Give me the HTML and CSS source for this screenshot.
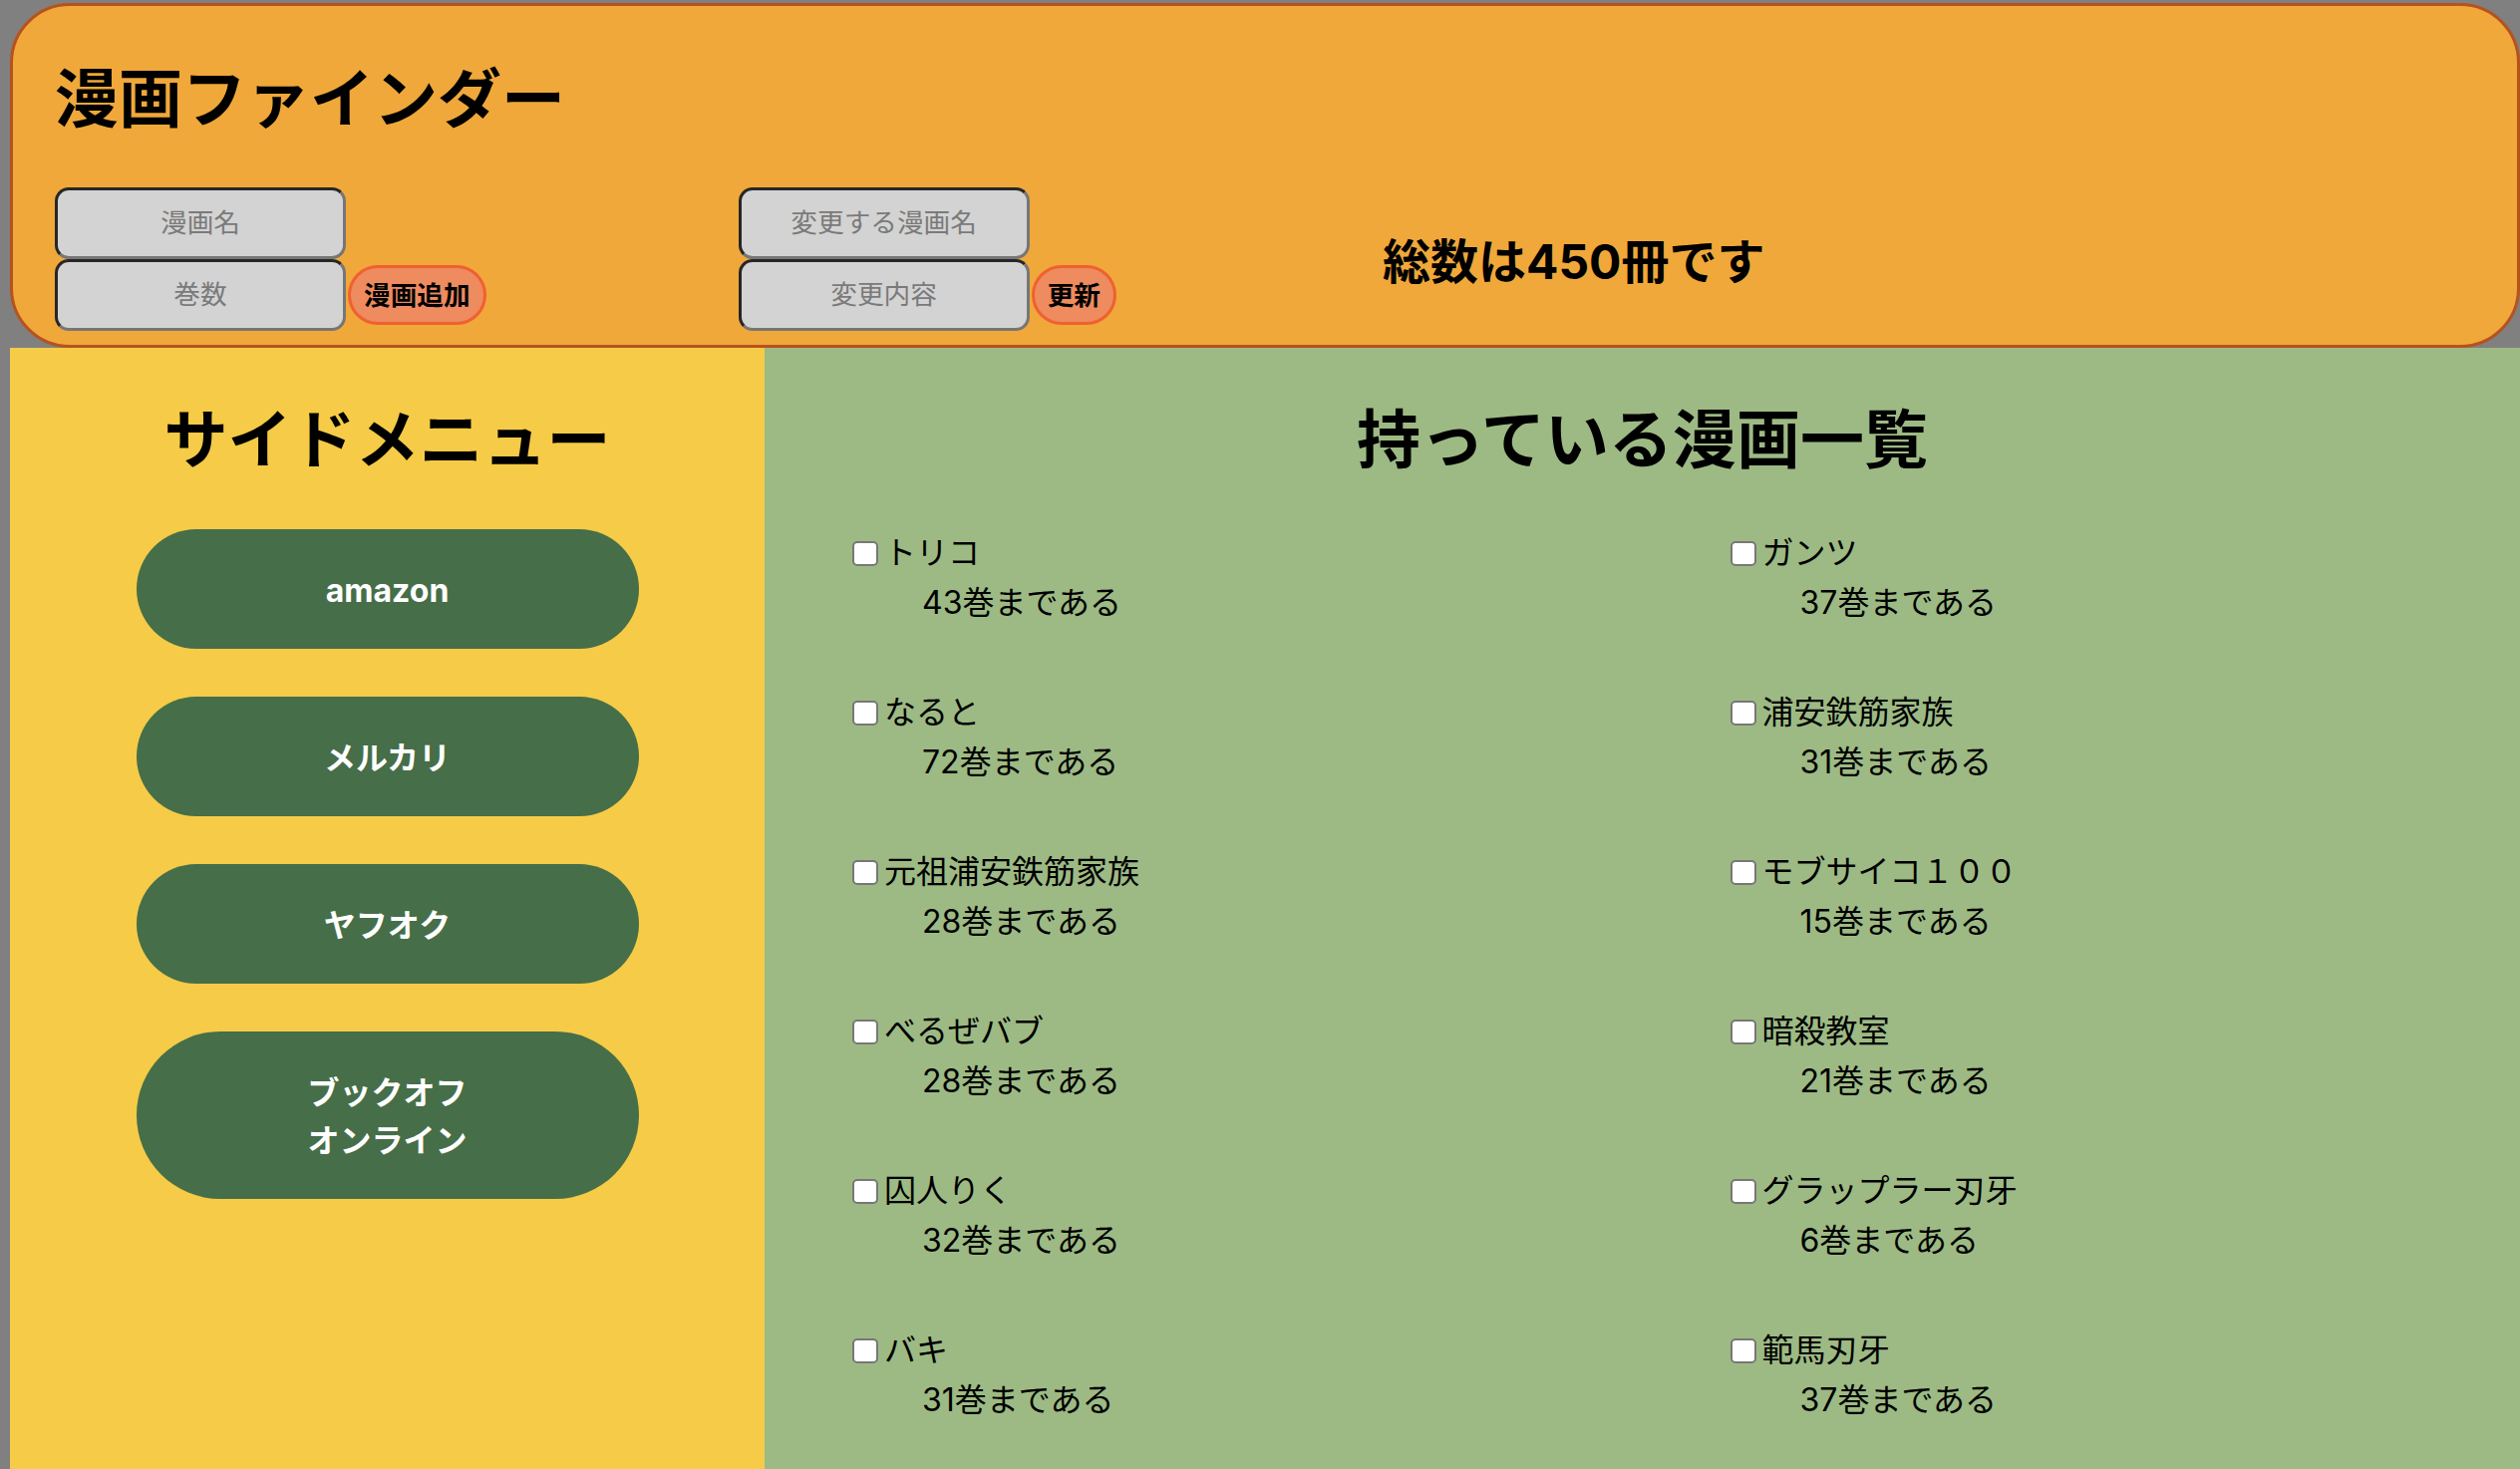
FILE: index.html
```html
<!DOCTYPE html>
<html lang="ja">
<head>
<meta charset="utf-8">
<title>漫画ファインダー</title>
<link rel="stylesheet" href="styles.css">
</head>
<body>
<div class="page">
  <header class="header">
    <h1 class="site-title">漫画ファインダー</h1>
    <div class="forms">
      <div class="group">
        <input class="field" type="text" placeholder="漫画名">
        <div class="field-row">
          <input class="field" type="text" placeholder="巻数">
          <button class="action">漫画追加</button>
        </div>
      </div>
      <div class="group group-update">
        <input class="field" type="text" placeholder="変更する漫画名">
        <div class="field-row">
          <input class="field" type="text" placeholder="変更内容">
          <button class="action">更新</button>
        </div>
      </div>
      <h2 class="total">総数は450冊です</h2>
    </div>
  </header>
  <div class="content">
    <aside class="sidebar">
      <h2 class="section-title">サイドメニュー</h2>
      <a class="side-btn">amazon</a>
      <a class="side-btn">メルカリ</a>
      <a class="side-btn">ヤフオク</a>
      <a class="side-btn">ブックオフ<br>オンライン</a>
    </aside>
    <main class="main">
      <h2 class="section-title">持っている漫画一覧</h2>
      <div class="list">
        <div class="item"><label class="name"><input type="checkbox" class="check">トリコ</label><div class="count">43巻まである</div></div>
        <div class="item"><label class="name"><input type="checkbox" class="check">ガンツ</label><div class="count">37巻まである</div></div>
        <div class="item"><label class="name"><input type="checkbox" class="check">なると</label><div class="count">72巻まである</div></div>
        <div class="item"><label class="name"><input type="checkbox" class="check">浦安鉄筋家族</label><div class="count">31巻まである</div></div>
        <div class="item"><label class="name"><input type="checkbox" class="check">元祖浦安鉄筋家族</label><div class="count">28巻まである</div></div>
        <div class="item"><label class="name"><input type="checkbox" class="check">モブサイコ１００</label><div class="count">15巻まである</div></div>
        <div class="item"><label class="name"><input type="checkbox" class="check">べるぜバブ</label><div class="count">28巻まである</div></div>
        <div class="item"><label class="name"><input type="checkbox" class="check">暗殺教室</label><div class="count">21巻まである</div></div>
        <div class="item"><label class="name"><input type="checkbox" class="check">囚人りく</label><div class="count">32巻まである</div></div>
        <div class="item"><label class="name"><input type="checkbox" class="check">グラップラー刃牙</label><div class="count">6巻まである</div></div>
        <div class="item"><label class="name"><input type="checkbox" class="check">バキ</label><div class="count">31巻まである</div></div>
        <div class="item"><label class="name"><input type="checkbox" class="check">範馬刃牙</label><div class="count">37巻まである</div></div>
      </div>
    </main>
  </div>
</div>
</body>
</html>
```

FILE: styles.css
```css
html, body {
  margin: 0;
  padding: 0;
  background: #808080;
}

body {
  font-family: Inter, "Noto Sans CJK JP", sans-serif;
  font-size: 32px;
  line-height: 1.5;
  color: #000;
  overflow: hidden;
}

.page {
  padding: 3px 0 0 10px;
}

.header {
  background: #f0a83a;
  border: 3px solid #b5521e;
  border-radius: 60px;
  padding: 0 42px 14px;
}

.site-title {
  font-family: "Noto Sans CJK JP", sans-serif;
  font-size: 64px;
  line-height: 96px;
  font-weight: 700;
  margin: 40px 0 46px;
}

.forms {
  display: flex;
  align-items: center;
}

.group {
  display: flex;
  flex-direction: column;
}

.group-update {
  margin-left: 253px;
}

.field-row {
  display: flex;
  align-items: center;
}

.field {
  box-sizing: border-box;
  width: 292px;
  height: 72px;
  margin: 0;
  padding: 0 8px 5px;
  background: #d3d3d3;
  border: 3px solid;
  border-color: #262626 #767676 #767676 #262626;
  border-radius: 14px;
  font-family: "Noto Sans CJK JP", sans-serif;
  font-size: 26.67px;
  text-align: center;
  color: #000;
}

.field::placeholder {
  color: #7a7a7a;
}

.action {
  box-sizing: border-box;
  height: 60px;
  margin-left: 2px;
  padding: 0 13px 3px;
  background: #ee8b5f;
  border: 3px solid #ef6130;
  border-radius: 30px;
  font-family: "Noto Sans CJK JP", sans-serif;
  font-size: 26.67px;
  font-weight: 700;
  color: #000;
}

.total {
  margin: 0 0 0 267px;
  padding-top: 6px;
  font-size: 48px;
  line-height: 72px;
  font-weight: 700;
}

.content {
  display: flex;
  min-height: 1200px;
}

.sidebar {
  width: 757px;
  flex: none;
  background: #f5cb47;
  text-align: center;
}

.section-title {
  font-family: "Noto Sans CJK JP", sans-serif;
  font-size: 64px;
  line-height: 96px;
  font-weight: 700;
  margin: 39px 0 47px;
  text-align: center;
}

.side-btn {
  display: block;
  width: 504px;
  margin: 0 auto 48px;
  padding: 38px 0 34px;
  line-height: 48px;
  font-size: 32px;
  font-weight: 700;
  color: #fff;
  background: #466e48;
  border-radius: 999px;
}

.main {
  flex: 1;
  background: #9dba84;
}

.list {
  display: grid;
  grid-template-columns: 1fr 1fr;
  row-gap: 62px;
}

.item {
  padding-left: 81px;
}

.name {
  display: flex;
  align-items: center;
  height: 48px;
}

.check {
  appearance: none;
  -webkit-appearance: none;
  box-sizing: border-box;
  width: 26px;
  height: 25px;
  margin: 0 6px 0 7px;
  background: #fff;
  border: 2px solid #777;
  border-radius: 5px;
}

.count {
  padding-left: 77px;
  padding-top: 2px;
}
```
